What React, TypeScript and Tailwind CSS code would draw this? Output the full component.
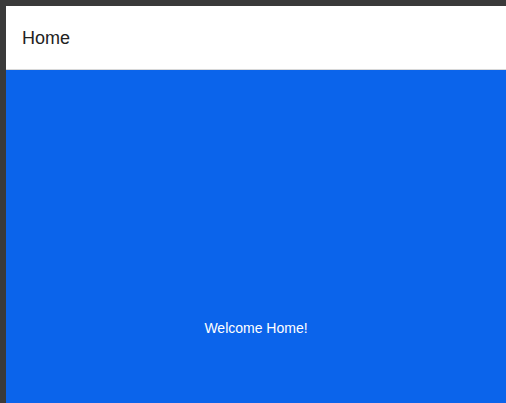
export default function App() {
  return (
    <div className="w-[506px] h-[403px] overflow-hidden bg-[#3a3a3a] pl-[6px] pt-[6px]" style={{ fontFamily: '"Liberation Sans", Arial, sans-serif' }}>
      <div className="w-full h-full flex flex-col bg-white">
        <div className="h-[64px] flex items-center pl-[16px] pt-[1px] text-[18px] text-[#222222] border-b border-[#d8d8d8] shrink-0">
          Home
        </div>
        <div className="flex-1 bg-[#0b64eb] flex justify-center pt-[248px]">
          <span className="text-[14px] text-white">Welcome Home!</span>
        </div>
      </div>
    </div>
  );
}
